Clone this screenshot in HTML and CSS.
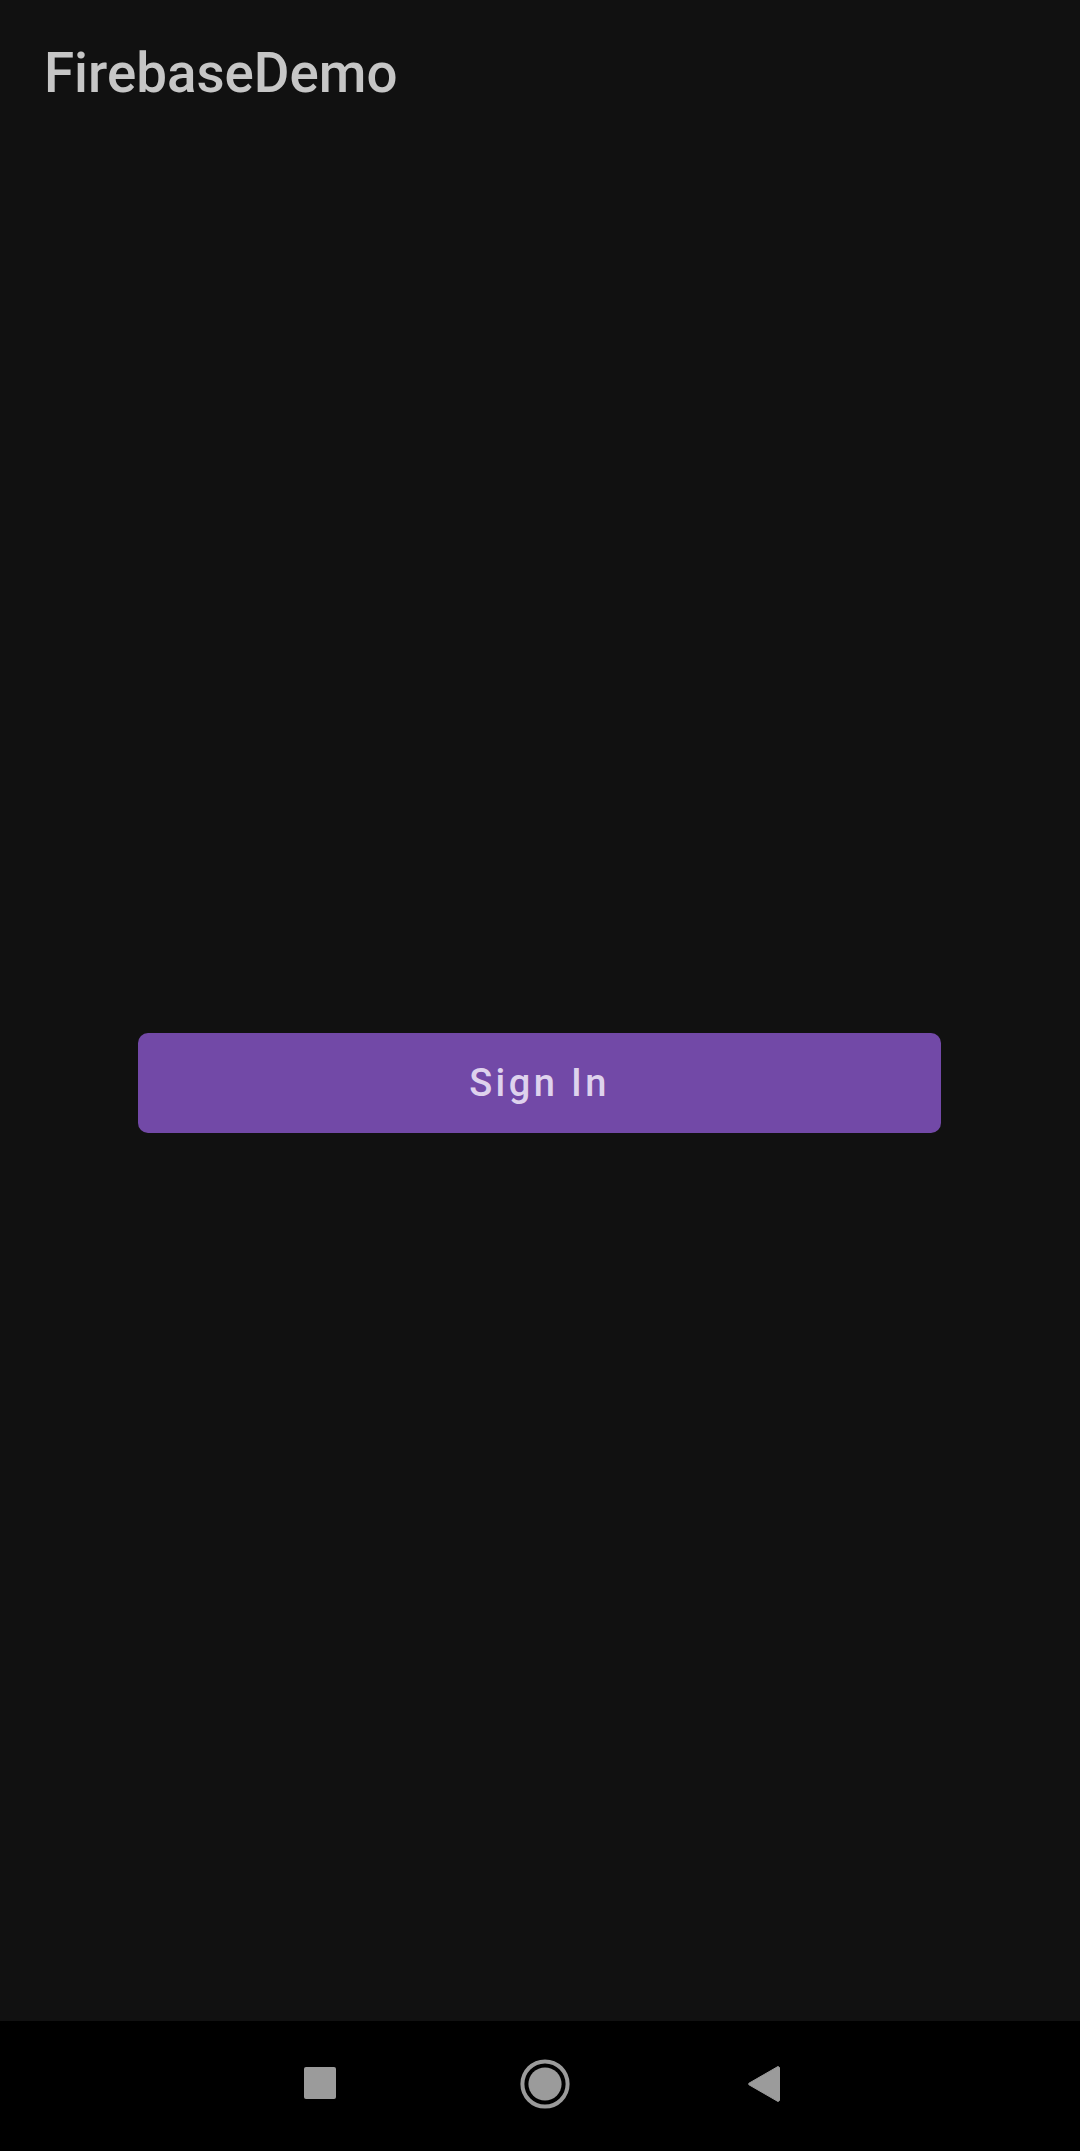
FILE: index.html
```html
<!DOCTYPE html>
<html lang="en">
<head>
<meta charset="utf-8">
<title>FirebaseDemo</title>
<link rel="stylesheet" href="styles.css">
</head>
<body>
<div class="screen">
  <header class="toolbar">
    <h1 class="title">FirebaseDemo</h1>
  </header>
  <main class="content">
    <button class="sign-in" type="button">Sign In</button>
  </main>
  <nav class="navbar">
    <svg class="nav-icon" width="32" height="32" viewBox="0 0 32 32"><rect x="0" y="0" width="32" height="32" rx="2" fill="#9b9b9b"/></svg>
    <svg class="nav-icon" width="50" height="50" viewBox="0 0 50 50"><circle cx="25" cy="25" r="22.6" fill="none" stroke="#9b9b9b" stroke-width="4"/><circle cx="25" cy="25" r="16.6" fill="#9b9b9b"/></svg>
    <svg class="nav-icon" width="34" height="38" viewBox="0 0 34 38"><path d="M31 1.5 L32.5 2.5 L32.5 35.5 L31 36.5 L2 19.8 L1.5 19 L2 18.2 Z" fill="#9b9b9b" stroke="#9b9b9b" stroke-width="1" stroke-linejoin="round"/></svg>
  </nav>
</div>
</body>
</html>
```

FILE: styles.css
```css
html, body {
  margin: 0;
  padding: 0;
  background: #111111;
}

.screen {
  width: 1080px;
  height: 2151px;
  display: flex;
  flex-direction: column;
  background: #111111;
  font-family: Roboto, "Noto Sans", sans-serif;
}

.toolbar {
  height: 154px;
  box-sizing: border-box;
  padding: 45px 0 0 44px;
}

.title {
  margin: 0;
  font-size: 54.7px;
  line-height: 56px;
  font-weight: 500;
  color: #c6c6c6;
  letter-spacing: 0;
}

.content {
  flex: 1;
  display: flex;
  align-items: center;
  justify-content: center;
  padding-bottom: 9px;
}

.sign-in {
  width: 803px;
  height: 100px;
  margin-left: -1px;
  border: none;
  border-radius: 10px;
  background: #7249a7;
  color: #ded2ed;
  font-family: Roboto, "Noto Sans", sans-serif;
  font-size: 38px;
  font-weight: 500;
  letter-spacing: 0.09em;
  padding: 0;
  cursor: pointer;
}

.navbar {
  height: 130px;
  box-sizing: border-box;
  padding: 0 0 6px 5px;
  background: #000000;
  display: flex;
  align-items: center;
  justify-content: center;
}

.nav-icon {
  display: block;
}

.nav-recents {
  margin-right: 184px;
}

.navbar .nav-icon:nth-child(1) {
  margin-right: 184px;
}

.navbar .nav-icon:nth-child(2) {
  margin-right: 177px;
  margin-top: 1px;
}

.navbar .nav-icon:nth-child(3) {
  margin-top: 2px;
}
```
